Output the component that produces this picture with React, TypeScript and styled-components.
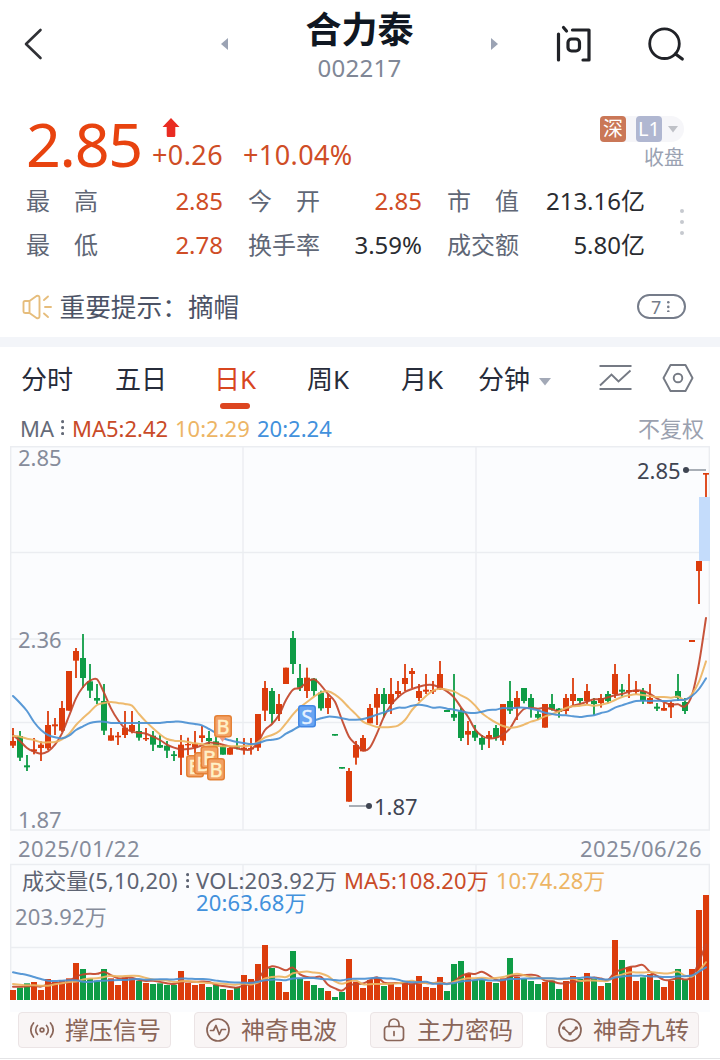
import React from "react";
import styled, { createGlobalStyle } from "styled-components";

const RED = "#dc3c0c";
const GREEN = "#0e9c46";
const LINE_RED = "#c2452a";
const LINE_GOLD = "#edb462";
const LINE_BLUE = "#4b90d2";
const SANS = '"Noto Sans", "Noto Sans CJK SC", sans-serif';

const GlobalStyle = createGlobalStyle`
  * { box-sizing: border-box; }
  body { margin: 0; background: #fff; font-family: ${SANS}; color: #25282f; }
  svg { display: block; flex: none; }
`;

const Page = styled.main`
  width: 720px;
  height: 1060px;
  overflow: hidden;
  display: flex;
  flex-direction: column;
  background: #fff;
`;

const Header = styled.header`
  height: 90px;
  flex: none;
  display: grid;
  grid-template-columns: 221px 7px 263px 7px 1fr;
  align-items: start;
`;
const HeaderIcon = styled.div<{ $top: number; $left?: number }>`
  padding-top: ${(p) => p.$top}px;
  padding-left: ${(p) => p.$left ?? 0}px;
`;
const HeaderActions = styled.div`
  display: flex;
  gap: 56px;
  padding: 25px 0 0 58px;
`;
const TitleBlock = styled.div`
  text-align: center;
`;
const Title = styled.h1`
  margin: 6px 0 0;
  font: 700 36px/42px "Noto Sans CJK SC", sans-serif;
  color: #101722;
`;
const Code = styled.div`
  margin-top: 6px;
  font-size: 24px;
  line-height: 28px;
  letter-spacing: 0.25px;
  color: #808796;
`;

const PriceRow = styled.section`
  height: 90px;
  flex: none;
  display: flex;
  padding: 0 36px 0 26px;
`;
const Price = styled.div`
  width: 126px;
  padding-top: 14px;
  font-size: 61px;
  font-weight: 450;
  line-height: 80px;
  letter-spacing: -1.3px;
  color: #e8430f;
`;
const Changes = styled.div`
  flex: 1;
  padding-top: 28px;
`;
const ArrowBox = styled.div`
  padding-left: 10px;
  height: 21px;
`;
const ChangeValues = styled.div`
  display: flex;
  gap: 20px;
  font-size: 27px;
  line-height: 32px;
  letter-spacing: 0.4px;
  color: #cf4d26;
`;
const Badges = styled.div`
  padding-top: 26px;
`;
const BadgeLine = styled.div`
  display: flex;
  width: 84px;
  height: 26px;
  gap: 10px;
  background: #f6f6f9;
  border-radius: 4px 13px 13px 4px;
  align-items: center;
`;
const Badge = styled.span<{ $bg: string }>`
  width: 26px;
  height: 26px;
  border-radius: 4px;
  background: ${(p) => p.$bg};
  color: #fff;
  font-size: 20px;
  line-height: 26px;
  text-align: center;
  & + svg { margin-left: -4px; }
`;
const CloseState = styled.div`
  padding-top: 3px;
  text-align: right;
  font-size: 20px;
  line-height: 26px;
  color: #9aa2b2;
`;

const StatsArea = styled.section`
  height: 94px;
  flex: none;
  display: flex;
  justify-content: space-between;
  padding: 0 36px 0 26px;
`;
const Stats = styled.dl`
  margin: -1px 0 0;
  display: grid;
  grid-template-columns: 197px 199px 223px;
  grid-template-rows: 44px 44px;
`;
const Stat = styled.div<{ $indent: number }>`
  display: flex;
  justify-content: space-between;
  padding-left: ${(p) => p.$indent}px;
  font-size: 24px;
  line-height: 43px;
`;
const StatName = styled.dt`
  width: 72px;
  display: flex;
  justify-content: space-between;
  color: #606776;
`;
const StatValue = styled.dd<{ $up?: boolean }>`
  margin: 0;
  color: ${(p) => (p.$up ? "#cf4d26" : "#2a2c31")};
`;
const MoreDots = styled.div`
  padding-top: 29px;
`;

const Notice = styled.section`
  height: 63px;
  flex: none;
  display: flex;
  align-items: center;
  padding: 5px 34px 0 22px;
  font-size: 25.7px;
  color: #4c5366;
`;
const NoticeText = styled.div`
  flex: 1;
  margin-left: 6.5px;
  line-height: 36px;
`;
const CountPill = styled.div`
  width: 49px;
  height: 25px;
  margin-bottom: 3px;
  border: 2px solid #757c8a;
  border-radius: 13px;
  display: flex;
  align-items: center;
  justify-content: center;
  gap: 6px;
  padding-right: 2px;
  font-size: 18px;
  line-height: 20px;
  color: #757c8a;
`;
const Divider = styled.div`
  height: 10px;
  flex: none;
  background: #f3f5f9;
`;

const Tabs = styled.nav`
  height: 66px;
  flex: none;
  display: flex;
  padding: 0 26px 0 21px;
  font-size: 26px;
  color: #272c3a;
`;
const Tab = styled.div<{ $w: number; $active?: boolean }>`
  width: ${(p) => p.$w}px;
  flex: none;
  padding-top: 14px;
  line-height: 36px;
  white-space: nowrap;
  color: ${(p) => (p.$active ? "#d8461f" : "inherit")};
  display: flex;
  flex-direction: ${(p) => (p.$active ? "column" : "row")};
`;
const Underline = styled.span`
  width: 30px;
  height: 6px;
  margin: 6px 0 0 6px;
  border-radius: 3px;
  background: #dc4520;
`;
const TabCaret = styled.span`
  padding: 17px 0 0 9px;
`;
const TabIcon = styled.div<{ $left?: number }>`
  padding-top: 17px;
  margin-left: ${(p) => p.$left ?? 0}px;
`;

const Legend = styled.div`
  height: 33px;
  flex: none;
  display: flex;
  align-items: center;
  padding: 0 16px 4px 20px;
  font-size: 22px;
  line-height: 30px;
  white-space: nowrap;
`;
const LegendItem = styled.span<{ $color: string; $w?: number }>`
  color: ${(p) => p.$color};
  flex: none;
  width: ${(p) => (p.$w ? `${p.$w}px` : "auto")};
  display: flex;
  align-items: center;
`;
const Spacer = styled.span`
  flex: 1;
`;

const ChartArea = styled.section`
  position: relative;
  width: 700px;
  height: 566px;
  flex: none;
  margin-left: 10px;
  background: #fbfcfe;
`;
const Label = styled.span<{ $x: number; $y: number; $color?: string; $ls?: number }>`
  position: absolute;
  left: ${(p) => p.$x}px;
  top: ${(p) => p.$y}px;
  font-size: 22px;
  line-height: 26px;
  letter-spacing: ${(p) => p.$ls ?? 0}px;
  color: ${(p) => p.$color ?? "#868c9b"};
  white-space: nowrap;
  display: flex;
  align-items: center;
`;

const Tools = styled.footer`
  height: 47px;
  flex: none;
  display: flex;
  gap: 23px;
  padding-left: 18px;
  border-bottom: 1px solid #e4e4e6;
`;
const Tool = styled.button`
  width: 153px;
  height: 36px;
  padding: 0;
  border: 1px solid #ebe4e5;
  border-radius: 4px;
  background: #f9f5f5;
  color: #8a6558;
  display: flex;
  align-items: center;
  justify-content: center;
  gap: 11px;
  padding-left: 2px;
  font: 24px/32px ${SANS};
  white-space: nowrap;
`;

type Bar = [string, number, number, number, number, number];

/* direction, high, body top, body bottom, low, volume — in thirds of a pixel */
const BARS: Bar[] = [
  ["r", 324, 363, 377, 384, 30], ["g", 333, 348, 413, 423, 37], ["g", 405, 436, 442, 453, 50],
  ["r", 354, 388, 394, 403, 54], ["r", 364, 374, 384, 423, 30], ["r", 273, 315, 385, 390, 63],
  ["r", 294, 313, 319, 345, 55], ["r", 243, 264, 332, 336, 59], ["r", 153, 153, 272, 272, 65],
  ["r", 84, 93, 122, 174, 111], ["g", 42, 114, 174, 204, 93], ["g", 132, 184, 212, 234, 65],
  ["g", 192, 234, 242, 252, 58], ["g", 192, 243, 332, 345, 93], ["r", 324, 346, 362, 362, 65],
  ["r", 336, 347, 352, 375, 45], ["r", 273, 323, 345, 354, 67], ["r", 273, 315, 334, 340, 65],
  ["g", 303, 333, 353, 362, 58], ["r", 324, 354, 358, 363, 51], ["g", 333, 347, 374, 393, 48],
  ["g", 345, 375, 383, 384, 50], ["g", 363, 377, 392, 414, 45], ["g", 393, 403, 408, 423, 45],
  ["r", 345, 374, 413, 465, 87], ["r", 353, 372, 376, 405, 51], ["r", 333, 372, 382, 400, 45],
  ["r", 318, 346, 354, 367, 48], ["g", 333, 354, 363, 372, 39], ["g", 345, 364, 380, 405, 45],
  ["g", 375, 378, 404, 404, 33], ["r", 378, 384, 404, 404, 30], ["g", 354, 378, 383, 388, 39],
  ["r", 354, 383, 389, 404, 75], ["r", 354, 384, 388, 404, 63], ["r", 282, 282, 383, 393, 108],
  ["r", 183, 204, 272, 303, 165], ["g", 204, 213, 282, 310, 96], ["r", 222, 252, 282, 303, 54],
  ["r", 143, 143, 192, 192, 24], ["g", 33, 54, 132, 162, 147], ["g", 132, 174, 203, 213, 63],
  ["r", 143, 173, 213, 234, 57], ["g", 174, 176, 213, 228, 45], ["g", 212, 218, 265, 272, 36],
  ["r", 222, 234, 264, 282, 27], ["g", 342, 342, 347, 347, 9], ["g", 441, 441, 446, 446, 24],
  ["r", 444, 453, 545, 545, 123], ["r", 363, 375, 413, 434, 55], ["r", 345, 354, 394, 394, 36],
  ["r", 252, 264, 310, 310, 60], ["r", 204, 222, 263, 315, 67], ["g", 204, 222, 252, 292, 42],
  ["r", 174, 222, 252, 282, 48], ["r", 183, 213, 222, 234, 39], ["r", 132, 174, 192, 213, 54],
  ["r", 144, 153, 162, 204, 50], ["r", 192, 213, 234, 243, 72], ["r", 162, 209, 215, 222, 39],
  ["r", 183, 210, 215, 222, 36], ["r", 123, 162, 208, 210, 69], ["g", 270, 270, 276, 276, 27],
  ["g", 162, 282, 293, 303, 108], ["g", 264, 274, 354, 363, 117], ["r", 303, 333, 344, 375, 78],
  ["g", 315, 333, 353, 363, 60], ["g", 345, 354, 374, 390, 60], ["r", 333, 345, 354, 384, 54],
  ["g", 315, 324, 353, 362, 51], ["r", 252, 252, 362, 375, 65], ["g", 183, 243, 272, 282, 126],
  ["r", 213, 234, 262, 300, 69], ["g", 204, 204, 243, 250, 63], ["g", 222, 234, 262, 293, 57],
  ["g", 273, 282, 293, 300, 48], ["r", 252, 252, 323, 323, 54], ["g", 222, 252, 268, 272, 58],
  ["g", 264, 266, 276, 293, 33], ["r", 222, 234, 273, 283, 57], ["r", 174, 222, 243, 255, 72],
  ["g", 234, 234, 243, 250, 63], ["r", 192, 213, 243, 252, 81], ["g", 234, 243, 252, 285, 63],
  ["r", 222, 234, 249, 263, 42], ["g", 213, 222, 243, 250, 51], ["r", 132, 162, 222, 234, 180],
  ["g", 192, 209, 215, 230, 120], ["r", 162, 210, 216, 234, 99], ["r", 183, 210, 216, 222, 57],
  ["g", 204, 213, 243, 252, 68], ["r", 192, 234, 251, 251, 78], ["g", 249, 260, 266, 273, 60],
  ["r", 249, 264, 272, 272, 39], ["r", 243, 249, 262, 294, 57], ["g", 162, 213, 234, 243, 93],
  ["g", 234, 246, 273, 282, 60], ["r", 60, 60, 66, 66, 93], ["r", -177, -177, -147, -48, 270],
  ["r", -441, -441, -436, -369, 315],
];

const MA5 = [
  345, 363, 384, 395, 401, 394, 374, 340, 288, 235, 201, 182, 178, 218, 265, 300, 325, 335, 338, 341,
  350, 360, 374, 383, 388, 387, 383, 376, 368, 370, 374, 380, 385, 389, 388, 367, 330, 312, 285, 240,
  209, 204, 186, 178, 196, 222, 245, 300, 350, 373, 391, 382, 340, 290, 255, 232, 216, 207, 200, 195,
  195, 203, 214, 232, 262, 290, 328, 348, 355, 353, 343, 325, 290, 267, 263, 266, 263, 268, 274, 267,
  257, 252, 245, 238, 238, 232, 226, 222, 215, 211, 213, 222, 235, 246, 254, 253, 259, 225, 130, -6,
];
const MA10 = [
  348, 350, 356, 360, 367, 367, 366, 358, 342, 315, 294, 275, 255, 249, 246, 249, 252, 257, 282, 305,
  325, 343, 357, 362, 363, 366, 370, 373, 375, 377, 379, 379, 379, 378, 376, 366, 352, 345, 334, 310,
  283, 262, 246, 230, 217, 214, 224, 241, 263, 283, 305, 314, 321, 322, 321, 317, 300, 270, 248, 228,
  212, 206, 209, 214, 226, 237, 256, 280, 295, 308, 318, 323, 321, 314, 305, 299, 289, 282, 274, 264,
  259, 257, 254, 257, 254, 249, 240, 231, 226, 223, 225, 228, 231, 231, 233, 230, 240, 222, 185, 124,
];
const MA20 = [
  228, 249, 273, 306, 330, 345, 352, 355, 347, 330, 319, 309, 305, 305, 309, 309, 309, 309, 309, 309,
  309, 309, 306, 305, 305, 309, 312, 316, 327, 339, 354, 361, 366, 369, 372, 370, 362, 359, 355, 341,
  330, 318, 312, 302, 295, 290, 291, 295, 299, 299, 297, 291, 284, 277, 270, 263, 263, 257, 254, 257,
  263, 262, 266, 269, 274, 278, 279, 275, 270, 269, 264, 265, 263, 263, 266, 271, 278, 282, 285, 286,
  289, 291, 288, 286, 279, 274, 263, 256, 249, 243, 242, 243, 242, 243, 242, 240, 239, 228, 207, 175,
];

const volumes = BARS.map((b) => b[5]);
function volumeAverage(span: number, lead: number[]) {
  return volumes.map((_, i) => {
    if (i < span - 1) return lead[Math.min(i, lead.length - 1)];
    let sum = 0;
    for (let k = i - span + 1; k <= i; k++) sum += volumes[k];
    return sum / span;
  });
}
const VOL5 = volumeAverage(5, [40, 40, 41, 42]);
const VOL10 = volumeAverage(10, [48, 46, 44, 44, 43, 43, 47, 50, 54]);
const VOL20 = volumeAverage(20, [83, 79, 75, 69, 63, 58, 57, 58, 59, 59, 55, 54, 57, 58, 59, 60, 60, 62, 63]);

const barX = (i: number) => 3 + i * 7;
const priceY = (v: number) => 174 + v / 3;
const volumeY = (v: number) => 554 - v / 3;

function curve(values: number[], y: (v: number) => number) {
  const p = values.map((v, i) => [barX(i), y(v)]);
  let d = `M${p[0][0]} ${p[0][1]}`;
  for (let i = 0; i < p.length - 1; i++) {
    const a = p[Math.max(0, i - 1)];
    const b = p[i];
    const c = p[i + 1];
    const e = p[Math.min(p.length - 1, i + 2)];
    d += `C${b[0] + (c[0] - a[0]) / 6} ${b[1] + (c[1] - a[1]) / 6} ${c[0] - (e[0] - b[0]) / 6} ${c[1] - (e[1] - b[1]) / 6} ${c[0]} ${c[1]}`;
  }
  return d;
}

function Lines({ sets, y }: { sets: number[][]; y: (v: number) => number }) {
  const colors = [LINE_RED, LINE_GOLD, LINE_BLUE];
  return (
    <g fill="none" strokeWidth="2" strokeLinecap="round" strokeLinejoin="round">
      {sets.map((s, i) => (
        <path key={i} d={curve(s, y)} stroke={colors[i]} opacity={0.92} />
      ))}
    </g>
  );
}

function TradeMark({ x, y, sell }: { x: number; y: number; sell?: boolean }) {
  return (
    <g transform={`translate(${x} ${y})`}>
      <rect x="0.75" y="0.75" width="16.5" height="21" rx="2.5" fill={sell ? "#68a4f2" : "#f2a064"} stroke={sell ? "#4387e4" : "#e48136"} strokeWidth="1.5" />
      <text x="9" y="18.6" textAnchor="middle" fontSize="20" fontFamily={SANS} fill={sell ? "#e6f2ff" : "#fff1c8"} stroke={sell ? "#e6f2ff" : "#fff1c8"} strokeWidth="0.5">
        {sell ? "S" : "B"}
      </text>
    </g>
  );
}

function StockChart() {
  return (
    <svg width="700" height="566" viewBox="0 0 700 566">
      <g stroke="#ebedf1" strokeWidth="1.4" fill="none">
        <path d="M.7 384V.7H699.3V384" />
        <path d="M0 106.5H700M0 193H700M0 276.5H700M0 384H700M233 0V384M466 0V384" />
        <path d="M.7 554V418.5H699.3V554M0 501.5H700M233 418V554M466 418V554" />
      </g>
      {BARS.map(([dir, high, top, bottom, low, vol], i) => {
        const fill = dir === "r" ? RED : GREEN;
        return (
          <g key={i} fill={fill}>
            <rect x={barX(i) - 1} y={priceY(high)} width="2" height={(low - high) / 3} opacity={0.9} />
            <rect x={barX(i) - 3} y={priceY(top)} width="6" height={(bottom - top) / 3} />
            <rect x={barX(i) - 3} y={volumeY(vol)} width="6" height={vol / 3} />
          </g>
        );
      })}
      <rect x="689" y="51" width="11" height="64" fill="#c4dcfb" />
      <Lines sets={[MA5, MA10, MA20]} y={priceY} />
      <Lines sets={[VOL5, VOL10, VOL20]} y={volumeY} />
      <g stroke="#8d949f" strokeWidth="1.6">
        <path d="M676 24H696M339 360H359" />
      </g>
      <circle cx="676" cy="24" r="3" fill="#3f4552" />
      <circle cx="359" cy="360" r="3" fill="#3f4552" />
      <path d="M209 291H216L212.500 296Z" fill="#ef9c86" />
      <TradeMark x={176} y={309} />
      <TradeMark x={184} y={306} />
      <TradeMark x={190.5} y={300} />
      <TradeMark x={197} y={312} />
      <TradeMark x={204} y={269} />
      <TradeMark x={288} y={259} sell />
    </svg>
  );
}

function Dots({ size, gap, color }: { size: number; gap: number; color: string }) {
  const h = size + gap * 2;
  return (
    <svg width={size} height={h} fill={color}>
      {[0, 1, 2].map((k) => (
        <circle key={k} cx={size / 2} cy={size / 2 + gap * k} r={size / 2} />
      ))}
    </svg>
  );
}

const STATS: [string, string, boolean][] = [
  ["最高", "2.85", true], ["今开", "2.85", true], ["市值", "213.16亿", false],
  ["最低", "2.78", true], ["换手率", "3.59%", false], ["成交额", "5.80亿", false],
];

const TOOLS: [string, React.ReactNode][] = [
  ["撑压信号", (
    <g key="s"><circle cx="12" cy="12" r="1.900" /><path d="M7.500 7.500a6.500 6.500 0 0 0 0 9M16.500 7.500a6.500 6.500 0 0 1 0 9M3.500 5a10.500 10.500 0 0 0 0 14M20.500 5a10.500 10.500 0 0 1 0 14" /></g>
  )],
  ["神奇电波", (
    <g key="w"><circle cx="12" cy="12" r="11" /><path d="M4.500 12.500H7.500L10 7.500L13.300 16.500L15.500 11.500H19.500" /></g>
  )],
  ["主力密码", (
    <g key="l"><rect x="2.500" y="8.500" width="19" height="14" rx="3" /><path d="M7 8.500V6a5 5 0 0 1 10 0V8.500M12 13.500V17.500" /></g>
  )],
  ["神奇九转", (
    <g key="t"><circle cx="12" cy="12" r="11" /><path d="M5.500 10L12 16L18.500 10" /><circle cx="5.700" cy="10" r=".9" /><circle cx="18.300" cy="10" r=".9" /><circle cx="12" cy="15.800" r=".9" /></g>
  )],
];

export default function App() {
  return (
    <Page>
      <GlobalStyle />
      <Header>
        <HeaderIcon $top={27} $left={23}>
          <svg width="20" height="34" fill="none" stroke="#303136" strokeWidth="2.600" strokeLinecap="round" strokeLinejoin="round"><path d="M17.500 3L3 17L17.500 31" /></svg>
        </HeaderIcon>
        <HeaderIcon $top={38}>
          <svg width="7" height="12" fill="#9ba3b4"><path d="M7 0V12L0 6Z" /></svg>
        </HeaderIcon>
        <TitleBlock>
          <Title>合力泰</Title>
          <Code>002217</Code>
        </TitleBlock>
        <HeaderIcon $top={38}>
          <svg width="7" height="12" fill="#9ba3b4"><path d="M0 0V12L7 6Z" /></svg>
        </HeaderIcon>
        <HeaderActions>
          <svg width="36" height="38" fill="none" stroke="#202227" strokeWidth="3.200" strokeLinecap="round" strokeLinejoin="round">
            <path d="M2.500 9V35M7.500 2.500L10.500 6M16.500 5H33V35H27" /><rect x="12" y="14" width="11.500" height="12" rx="3.500" />
          </svg>
          <svg width="38" height="38" fill="none" stroke="#202227" strokeWidth="2.800" strokeLinecap="round">
            <circle cx="16.500" cy="18.700" r="14.800" /><path d="M27.500 29L34.300 34" strokeWidth="3.200" />
          </svg>
        </HeaderActions>
      </Header>

      <PriceRow>
        <Price>2.85</Price>
        <Changes>
          <ArrowBox>
            <svg width="18" height="20" fill="#e92c22"><path d="M9 0L17.500 9H13.300V17.500Q13.300 19 12 19H6Q4.700 19 4.700 17.500V9H.5Z" /></svg>
          </ArrowBox>
          <ChangeValues><span>+0.26</span><span>+10.04%</span></ChangeValues>
        </Changes>
        <Badges>
          <BadgeLine>
            <Badge $bg="#ca7757">深</Badge>
            <Badge $bg="#b0b7d1">L1</Badge>
            <svg width="10" height="7" fill="#bfc1c7"><path d="M0 0H10L5 6.500Z" /></svg>
          </BadgeLine>
          <CloseState>收盘</CloseState>
        </Badges>
      </PriceRow>

      <StatsArea>
        <Stats>
          {STATS.map(([name, value, up], i) => (
            <Stat key={name} $indent={i % 3 === 0 ? 0 : 25}>
              <StatName>{name.split("").map((c) => <span key={c}>{c}</span>)}</StatName>
              <StatValue $up={up}>{value}</StatValue>
            </Stat>
          ))}
        </Stats>
        <MoreDots><Dots size={4} gap={11} color="#c6c9cf" /></MoreDots>
      </StatsArea>

      <Notice>
        <svg width="31" height="28" fill="none" stroke="#e6bd7c" strokeWidth="1.900" strokeLinecap="round" strokeLinejoin="round">
          <path d="M7.500 7H3Q1.500 7 1.500 8.500V17.500Q1.500 19 3 19H7.500L14.500 24Q17.500 25 17.500 22V4Q17.500 1 14.500 2L7.500 7V19M22 6L26 2.500M23 13H29M22 19.500L26 23" />
        </svg>
        <NoticeText>重要提示：摘帽</NoticeText>
        <CountPill>7<Dots size={2.6} gap={4.6} color="#757c8a" /></CountPill>
      </Notice>
      <Divider />

      <Tabs>
        <Tab $w={94}>分时</Tab>
        <Tab $w={99}>五日</Tab>
        <Tab $w={93} $active>日K<Underline /></Tab>
        <Tab $w={94}>周K</Tab>
        <Tab $w={77}>月K</Tab>
        <Tab $w={121}>分钟<TabCaret><svg width="12" height="8" fill="#a3a9b7"><path d="M0 0H12L6 7.500Z" /></svg></TabCaret></Tab>
        <TabIcon>
          <svg width="33" height="28" fill="none" stroke="#757a84" strokeWidth="1.900"><path d="M.5 2H32.500M.5 25H32.500M1 21.500L12.500 10.500L19.500 17.500L31.500 6.500" /></svg>
        </TabIcon>
        <TabIcon $left={30}>
          <svg width="32" height="29" fill="none" stroke="#757a84" strokeWidth="1.900" strokeLinejoin="round"><path d="M8.500 1H23.500L30.500 14L23.500 27H8.500L1.500 14Z" /><circle cx="16" cy="14" r="4.300" /></svg>
        </TabIcon>
      </Tabs>

      <Legend>
        <LegendItem $color="#656b78" $w={41}>MA</LegendItem>
        <LegendItem $color="#656b78" $w={11}><Dots size={3.2} gap={6} color="#656b78" /></LegendItem>
        <LegendItem $color="#c94b28" $w={103}>MA5:2.42</LegendItem>
        <LegendItem $color="#edb565" $w={82}>10:2.29</LegendItem>
        <LegendItem $color="#4291dc">20:2.24</LegendItem>
        <Spacer />
        <LegendItem $color="#9ba1af">不复权</LegendItem>
      </Legend>

      <ChartArea>
        <StockChart />
        <Label $x={8} $y={-2}>2.85</Label>
        <Label $x={8} $y={180}>2.36</Label>
        <Label $x={8} $y={360}>1.87</Label>
        <Label $x={627} $y={11} $color="#3f4552">2.85</Label>
        <Label $x={364} $y={347} $color="#3f4552">1.87</Label>
        <Label $x={8} $y={389} $ls={0.5}>2025/01/22</Label>
        <Label $x={570} $y={389} $ls={0.5}>2025/06/26</Label>
        <Label $x={12} $y={421} $color="#5e6473" $ls={0.15}>成交量(5,10,20)</Label>
        <Label $x={176} $y={427}><Dots size={3.2} gap={6} color="#5e6473" /></Label>
        <Label $x={186} $y={421} $color="#5e6473" $ls={0.25}>VOL:203.92万</Label>
        <Label $x={334} $y={421} $color="#c94b28" $ls={0.15}>MA5:108.20万</Label>
        <Label $x={486} $y={421} $color="#edb565">10:74.28万</Label>
        <Label $x={186} $y={443} $color="#4291dc" $ls={0.15}>20:63.68万</Label>
        <Label $x={5} $y={457} $ls={0.15}>203.92万</Label>
      </ChartArea>

      <Tools>
        {TOOLS.map(([name, art]) => (
          <Tool key={name}>
            <svg width="24" height="24" viewBox="0 0 24 24" fill="none" stroke="#8a6558" strokeWidth="1.700" strokeLinecap="round" strokeLinejoin="round">{art}</svg>
            {name}
          </Tool>
        ))}
      </Tools>
    </Page>
  );
}
